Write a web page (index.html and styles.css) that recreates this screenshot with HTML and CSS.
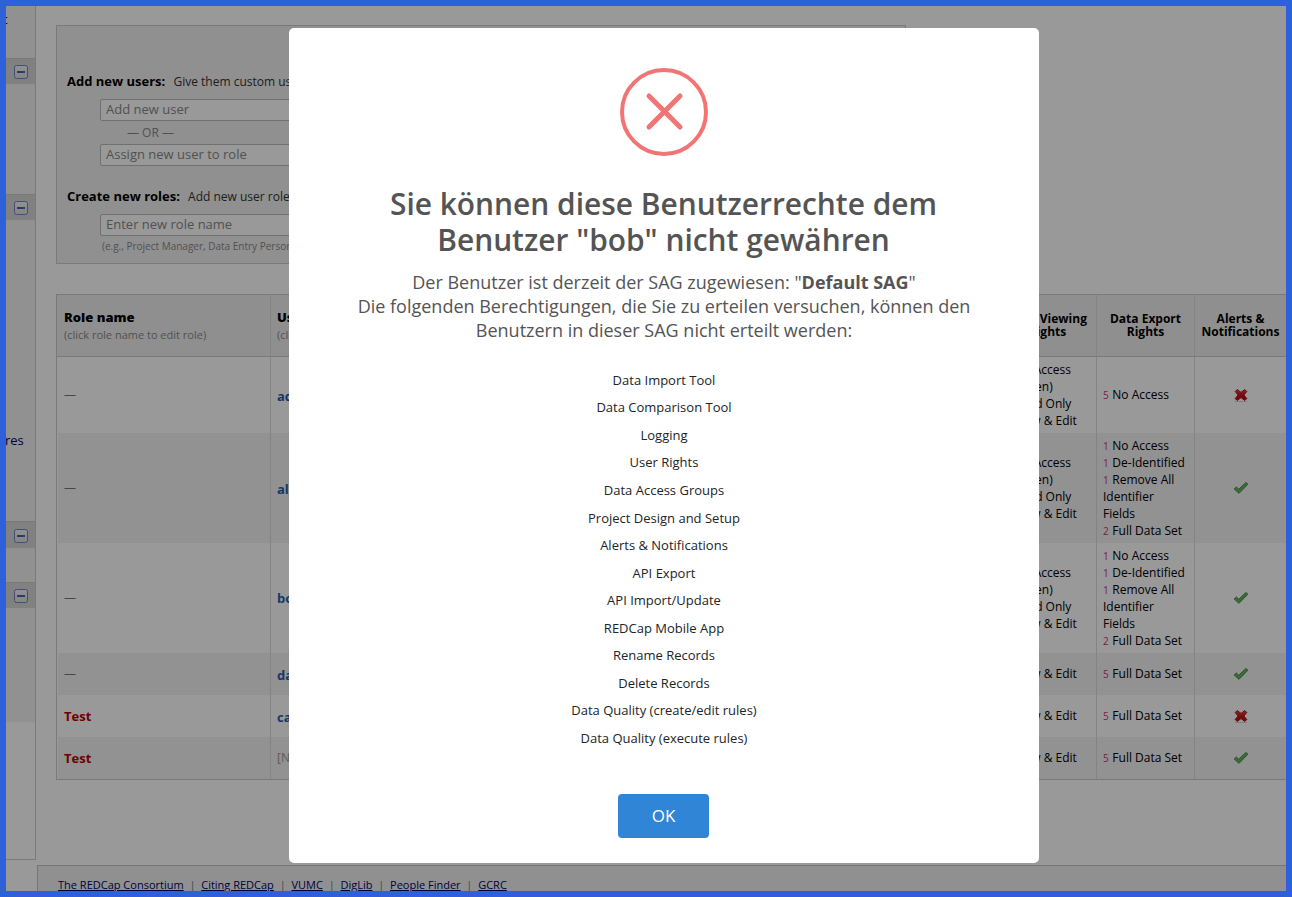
FILE: index.html
```
<!DOCTYPE html>
<html lang="de">
<head>
<meta charset="utf-8">
<title>REDCap</title>
<link rel="stylesheet" href="styles.css">
</head>
<body>
<svg class="defs" width="0" height="0">
  <defs>
    <linearGradient id="mg" x1="0" y1="0" x2="0" y2="1"><stop offset="0" stop-color="#f4f4f4"/><stop offset="1" stop-color="#dcdcdc"/></linearGradient>
    <linearGradient id="rg" x1="0" y1="0" x2="0" y2="1"><stop offset="0" stop-color="#e2484a"/><stop offset=".5" stop-color="#c81418"/><stop offset="1" stop-color="#b80c10"/></linearGradient>
    <symbol id="minus" viewBox="0 0 14 14"><rect x=".5" y=".5" width="13" height="13" rx="2" fill="url(#mg)" stroke="#7380c4"/><path d="M3 6h8v2H3z" fill="#4a62ae"/></symbol>
    <symbol id="tick" viewBox="0 0 16 16"><path d="M1.200 9L3.400 7l2.400 2.300L12.900 2.500l2 1.700L6 13.300z" fill="#66b560" stroke="#3f8a3c" stroke-linejoin="round"/></symbol>
    <symbol id="cross" viewBox="0 0 16 16"><path d="M2 14.500h12" stroke="#d2d2d2"/><path d="M4.200 2.500L8 5.400l3.800-2.900 2 2L10.900 8l2.900 3.500-2 2L8 10.600l-3.800 2.900-2-2L5.100 8 2.200 4.500z" fill="url(#rg)" stroke="#a8161a" stroke-linejoin="round"/></symbol>
  </defs>
</svg>
<div class="frame">
  <div class="page">
    <aside class="sidebar">
      <div class="side-body s1"><span>t</span></div>
      <div class="side-head"><svg><use href="#minus"/></svg></div>
      <div class="side-body s2"></div>
      <div class="side-head"><svg><use href="#minus"/></svg></div>
      <div class="side-body s3"><span class="link">res</span></div>
      <div class="side-head tall"><svg><use href="#minus"/></svg></div>
      <div class="side-body s4"></div>
      <div class="side-head"><svg><use href="#minus"/></svg></div>
      <div class="side-body s5"></div>
    </aside>
    <main class="main">
      <section class="panel">
        <div class="line"><b>Add new users:</b> <span>Give them custom user rights</span></div>
        <div class="field first">Add new user</div>
        <div class="or">— OR —</div>
        <div class="field">Assign new user to role</div>
        <div class="line second"><b>Create new roles:</b> <span>Add new user roles</span></div>
        <div class="field third">Enter new role name</div>
        <div class="hint">(e.g., Project Manager, Data Entry Person)</div>
      </section>
      <section class="table">
        <div class="row head">
          <div class="cell left"><b>Role name</b><small>(click role name to edit role)</small></div>
          <div class="cell left"><b>Username</b><small>(click username)</small></div>
          <div class="cell">Data Viewing Rights</div>
          <div class="cell">Data Export Rights</div>
          <div class="cell">Alerts &amp; Notifications</div>
        </div>
        <div class="row r1">
          <div class="cell dash">—</div><div class="cell user">admin</div>
          <div class="cell rights"><p><i>1</i> No Access (Hidden)</p><p><i>1</i> Read Only</p><p><i>3</i> View &amp; Edit</p></div>
          <div class="cell rights single"><p><i>5</i> No Access</p></div>
          <div class="cell icon"><svg><use href="#cross"/></svg></div>
        </div>
        <div class="row r2 alt">
          <div class="cell dash">—</div><div class="cell user">alice</div>
          <div class="cell rights"><p><i>1</i> No Access (Hidden)</p><p><i>1</i> Read Only</p><p><i>3</i> View &amp; Edit</p></div>
          <div class="cell rights"><p><i>1</i> No Access</p><p><i>1</i> De-Identified</p><p><i>1</i> Remove All Identifier Fields</p><p><i>2</i> Full Data Set</p></div>
          <div class="cell icon"><svg><use href="#tick"/></svg></div>
        </div>
        <div class="row r2">
          <div class="cell dash">—</div><div class="cell user up">bob</div>
          <div class="cell rights"><p><i>1</i> No Access (Hidden)</p><p><i>1</i> Read Only</p><p><i>3</i> View &amp; Edit</p></div>
          <div class="cell rights"><p><i>1</i> No Access</p><p><i>1</i> De-Identified</p><p><i>1</i> Remove All Identifier Fields</p><p><i>2</i> Full Data Set</p></div>
          <div class="cell icon"><svg><use href="#tick"/></svg></div>
        </div>
        <div class="row alt">
          <div class="cell dash">—</div><div class="cell user">dave</div>
          <div class="cell rights single"><p><i>5</i> View &amp; Edit</p></div>
          <div class="cell rights single"><p><i>5</i> Full Data Set</p></div>
          <div class="cell icon"><svg><use href="#tick"/></svg></div>
        </div>
        <div class="row">
          <div class="cell role">Test</div><div class="cell user">carol</div>
          <div class="cell rights single"><p><i>5</i> View &amp; Edit</p></div>
          <div class="cell rights single"><p><i>5</i> Full Data Set</p></div>
          <div class="cell icon"><svg><use href="#cross"/></svg></div>
        </div>
        <div class="row alt">
          <div class="cell role">Test</div><div class="cell none">[None]</div>
          <div class="cell rights single"><p><i>5</i> View &amp; Edit</p></div>
          <div class="cell rights single"><p><i>5</i> Full Data Set</p></div>
          <div class="cell icon"><svg><use href="#tick"/></svg></div>
        </div>
      </section>
      <footer class="footer"><a>The REDCap Consortium</a><span>|</span><a>Citing REDCap</a><span>|</span><a>VUMC</a><span>|</span><a>DigLib</a><span>|</span><a>People Finder</a><span>|</span><a>GCRC</a></footer>
    </main>
  </div>
  <div class="backdrop">
    <div class="modal" role="dialog">
      <svg class="error" viewBox="0 0 88 88"><circle cx="44" cy="44" r="42" fill="none" stroke="#f27474" stroke-width="4"/><path d="M29 28L60 59M60 28L29 59" stroke="#f27474" stroke-width="5" stroke-linecap="round"/></svg>
      <h2>Sie können diese Benutzerrechte dem<br>Benutzer "bob" nicht gewähren</h2>
      <p class="text">Der Benutzer ist derzeit der SAG zugewiesen: "<b>Default SAG</b>"<br>Die folgenden Berechtigungen, die Sie zu erteilen versuchen, können den<br>Benutzern in dieser SAG nicht erteilt werden:</p>
      <ul>
        <li>Data Import Tool</li><li>Data Comparison Tool</li><li>Logging</li><li>User Rights</li><li>Data Access Groups</li><li>Project Design and Setup</li><li>Alerts &amp; Notifications</li><li>API Export</li><li>API Import/Update</li><li>REDCap Mobile App</li><li>Rename Records</li><li>Delete Records</li><li>Data Quality (create/edit rules)</li><li>Data Quality (execute rules)</li>
      </ul>
      <button>OK</button>
    </div>
  </div>
</div>
</body>
</html>
```
FILE: styles.css
```
* { box-sizing: border-box; }
body { margin: 0; font: 13px/18px "Open Sans", sans-serif; color: #000; }
p, h2, ul { margin: 0; padding: 0; }
.defs { position: absolute; }
.frame { position: relative; width: 1292px; height: 897px; border: 6px solid #2f60dc; overflow: hidden; background: #fff; }
.page { display: flex; width: 1280px; height: 885px; overflow: hidden; }

.sidebar { flex: none; display: flex; flex-direction: column; width: 30px; height: 854px; border-right: 1px solid #ccc; border-bottom: 1px solid #ccc; overflow: hidden; }
.side-body { flex: none; display: flex; background: #f2f2f2; }
.side-body span { margin-left: -3px; margin-top: 4px; }
.side-body .link { margin-left: -1px; margin-top: 211px; color: #000066; }
.s1 { height: 52px; }
.s2 { height: 110px; }
.s3 { height: 301px; }
.s4 { height: 34px; }
.s5 { height: 114px; }
.side-head { flex: none; height: 26px; padding: 6px 0 0 8px; background: #d8d8d8; border-top: 1px solid #c9c9c9; }
.side-head.tall { height: 27px; padding-top: 7px; }
.side-head svg { display: block; width: 14px; height: 14px; }

.main { flex: none; display: flex; flex-direction: column; width: 1250px; padding-top: 19px; }
.panel { flex: none; width: 850px; height: 239px; margin-left: 20px; padding: 46px 0 0 10px; background: #f0f0f0; border: 1px solid #ccc; }
.line { font-size: 12px; color: #333; }
.line b { font-size: 13px; color: #000; margin-right: 5px; }
.line.second { margin-top: 21px; }
.field { width: 270px; height: 22px; margin-left: 33px; padding-left: 5px; font-size: 13px; line-height: 19px; color: #888; background: #fff; border: 1px solid #bbb; border-radius: 2px; }
.field.first { margin-top: 8px; }
.field.third { margin-top: 8px; }
.or { height: 23px; margin-left: 60px; font-size: 12px; line-height: 24px; color: #888; }
.hint { margin: 2px 0 0 35px; font-size: 10px; line-height: 17px; color: #888; }

.table { flex: none; width: 1231px; margin: 30px 0 0 20px; border: 1px solid #ccc; }
.row { display: grid; grid-template-columns: 214px 728px 98px 98px 1fr; height: 42px; }
.r1 { height: 76px; }
.r2 { height: 110px; }
.alt { background: #f3f3f3; border-left: 1px solid #fff; grid-template-columns: 213px 728px 98px 98px 1fr; }
.cell { display: flex; flex-direction: column; justify-content: center; padding: 0 6px; border-right: 1px solid #ddd; }
.cell:last-child { border-right: 0; }
.cell:first-child { padding-left: 7px; }
.alt .cell:first-child { padding-left: 6px; }
.head { height: 62px; background: #efefef; border-bottom: 1px solid #ccc; }
.head .cell { font-size: 12px; line-height: 13px; font-weight: 700; text-align: center; padding-bottom: 1px; }
.head .cell.left { text-align: left; line-height: 18px; padding-top: 1px; padding-bottom: 0; }
.head b { font-size: 13px; }
.head small { font-size: 11px; font-weight: 400; color: #888; }
.rights { font-size: 12px; line-height: 17px; }
.rights.single { padding-bottom: 2px; }
.rights i { font-style: normal; font-size: 10px; line-height: 0; margin-right: .5px; color: #cc3377; }
.dash { color: #777; font-size: 12px; }
.user { color: #1f5fae; font-weight: 700; padding-top: 1px; }
.user.up { padding-top: 0; padding-bottom: 1px; }
.role { color: #c00000; font-weight: 700; }
.none { color: #999; font-size: 12px; }
.icon { align-items: center; }
.icon svg { width: 16px; height: 16px; }

.footer { flex: none; display: flex; height: 40px; margin: 85px 0 0 1px; padding: 10px 0 0 20px; background: #f0f0f0; border-top: 1px solid #c4c4c4; border-left: 1px solid #c4c4c4; font-size: 11px; }
.footer a { color: #000066; text-decoration: underline; }
.footer span { width: 17.600px; text-align: center; color: #777; }

.backdrop { position: absolute; inset: 0; padding: 22px 0 0 283px; background: rgba(0, 0, 0, .4); }
.modal { display: flex; flex-direction: column; align-items: center; width: 750px; height: 835px; padding-top: 40px; background: #fff; border-radius: 5px; text-align: center; }
.error { flex: none; width: 88px; height: 88px; }
h2 { margin: 30px 1px 0 0; font-size: 29.900px; line-height: 36px; font-weight: 600; color: #545454; }
.text { margin: 12px 0 0 0; font-size: 18px; line-height: 24px; color: #545454; }
.modal ul { margin: 24.700px 0 0 0; list-style: none; font-size: 13px; line-height: 27.570px; color: #212529; }
button { width: 91px; height: 44px; margin: 41.300px 1px 0 0; padding: 0; border: 0; border-radius: 4px; background: #3085d6; color: #fff; font: 17px "Open Sans", sans-serif; }
```
